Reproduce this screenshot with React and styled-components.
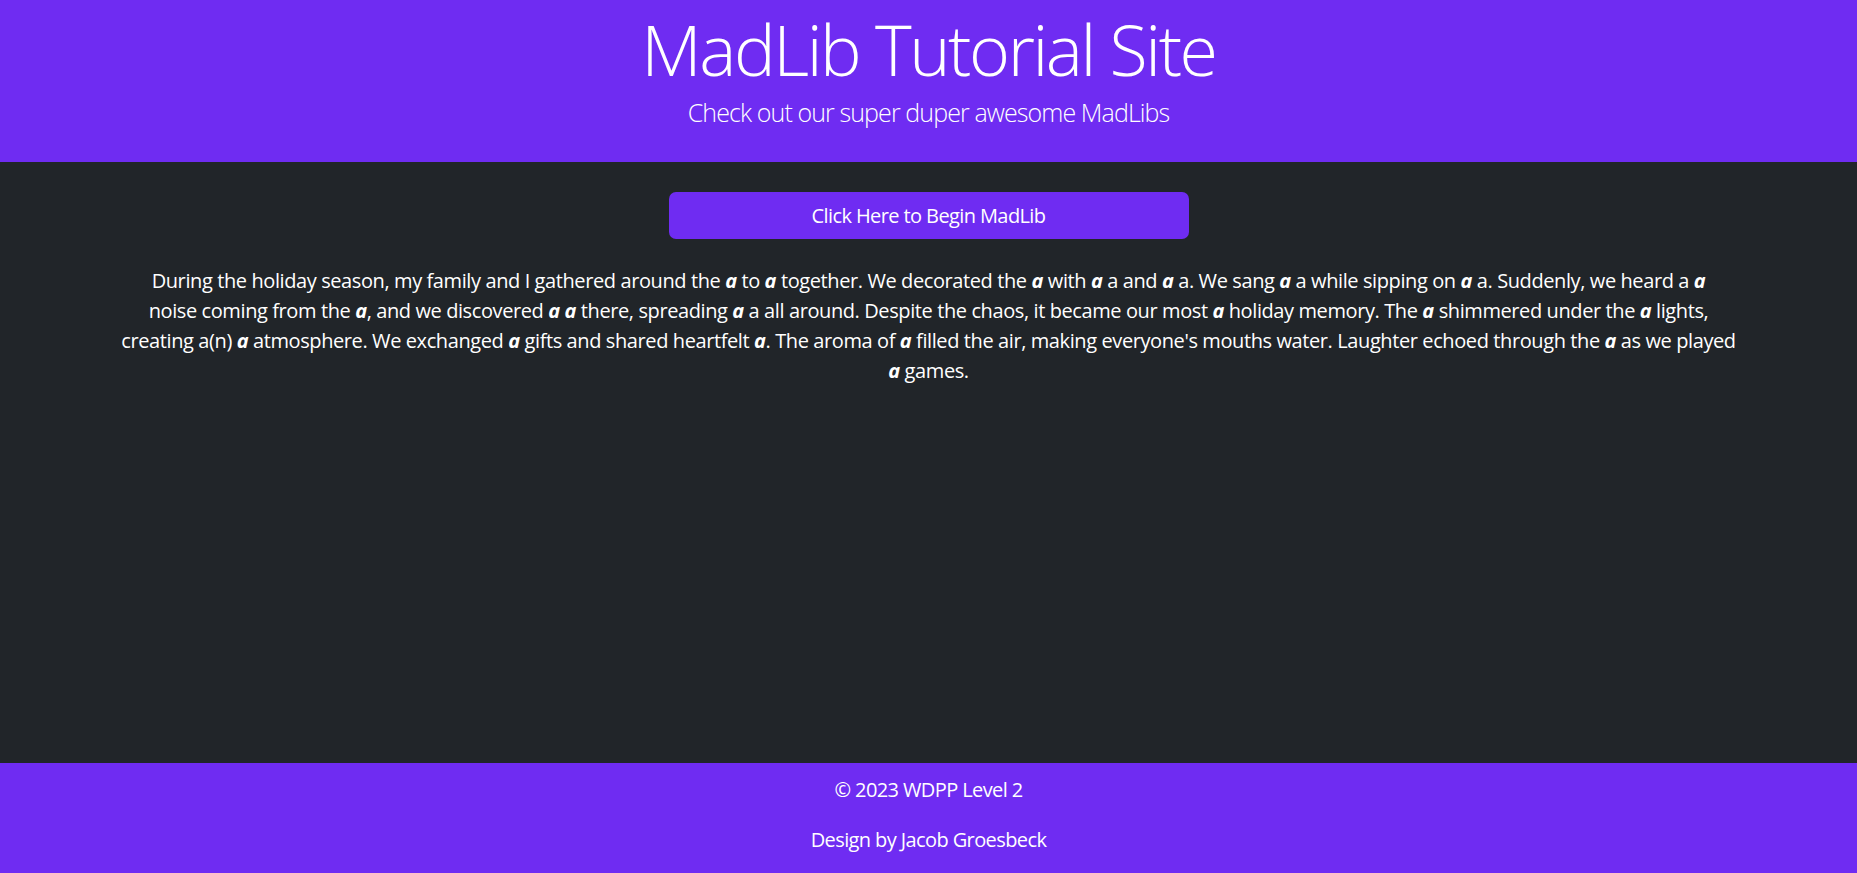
import React from 'react';
import styled, { createGlobalStyle } from 'styled-components';

const GlobalStyle = createGlobalStyle`
  html, body {
    margin: 0;
    padding: 0;
  }
  body {
    background-color: #212529;
    color: #fff;
    font-family: "Segoe UI", "Open Sans", "Noto Sans", sans-serif;
    font-size: 20px;
    line-height: 30px;
    letter-spacing: -0.03em;
  }
`;

const Page = styled.div`
  min-height: 100vh;
  display: flex;
  flex-direction: column;
`;

const Header = styled.header`
  height: 162px;
  box-sizing: border-box;
  background-color: #6f2cf2;
  text-align: center;
  padding-top: 7px;
`;

const Title = styled.h1`
  margin: 0;
  font-size: 70px;
  font-weight: 300;
  line-height: 84px;
  letter-spacing: -0.035em;
`;

const Lead = styled.p`
  margin: 3px 0 0;
  font-size: 25px;
  font-weight: 300;
  line-height: 37px;
  letter-spacing: -0.036em;
`;

const Main = styled.main`
  flex: 1;
  width: 1630px;
  margin: 0 auto;
  display: flex;
  flex-direction: column;
  align-items: center;
`;

const StartButton = styled.button`
  margin-top: 30px;
  width: 520px;
  height: 47px;
  border: none;
  border-radius: 7px;
  background-color: #6f2cf2;
  color: #fff;
  font-family: inherit;
  font-size: 20px;
  line-height: 30px;
  letter-spacing: inherit;
  cursor: pointer;
`;

const Story = styled.p`
  margin: 27px 0 0;
  text-align: center;
  letter-spacing: -0.02em;
`;

const Blank = styled.b`
  font-style: italic;
  font-weight: 700;
`;

const Footer = styled.footer`
  background-color: #6f2cf2;
  text-align: center;
  padding-top: 12px;
`;

const FooterLine = styled.p`
  margin: 0 0 20px;

  &:last-child {
    margin-bottom: 18px;
  }
`;

// * marks a blank, | marks where the original breaks the line
const story =
  'During the holiday season, my family and I gathered around the * to * together. We decorated the * with * a and * a. We sang * a while sipping on * a. Suddenly, we heard a *| noise coming from the *, and we discovered * * there, spreading * a all around. Despite the chaos, it became our most * holiday memory. The * shimmered under the * lights, creating a(n) * atmosphere. We exchanged * gifts and shared heartfelt *. The aroma of * filled the air, making everyone\'s mouths water. Laughter echoed through the * as we played *\u00a0games.';

function renderStory() {
  return story.split('|').map((chunk, c) => {
    const parts = chunk.split('*');
    return (
      <React.Fragment key={c}>
        {c > 0 && <br />}
        {parts.map((text, i) => (
          <React.Fragment key={i}>
            {text}
            {i < parts.length - 1 && <Blank>a</Blank>}
          </React.Fragment>
        ))}
      </React.Fragment>
    );
  });
}

export default function App() {
  return (
    <Page>
      <GlobalStyle />
      <Header>
        <Title>MadLib Tutorial Site</Title>
        <Lead>Check out our super duper awesome MadLibs</Lead>
      </Header>
      <Main>
        <StartButton>Click Here to Begin MadLib</StartButton>
        <Story>{renderStory()}</Story>
      </Main>
      <Footer>
        <FooterLine>© 2023 WDPP Level 2</FooterLine>
        <FooterLine>Design by Jacob Groesbeck</FooterLine>
      </Footer>
    </Page>
  );
}
